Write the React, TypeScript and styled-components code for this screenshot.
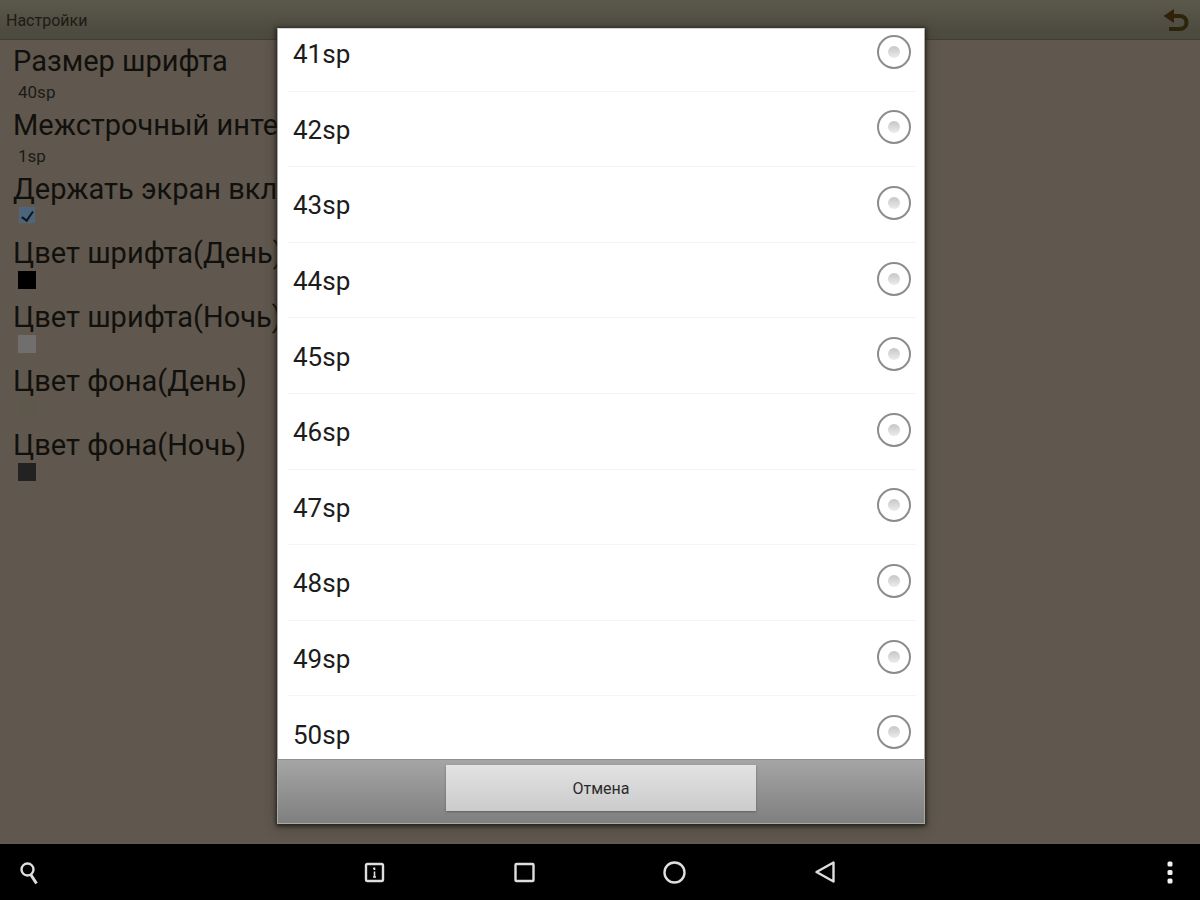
import React, { useState } from "react";
import styled, { createGlobalStyle } from "styled-components";

const GlobalStyle = createGlobalStyle`
  * { box-sizing: border-box; }
  body { margin: 0; background: #000; font-family: Roboto, "Liberation Sans", sans-serif; }
`;

const PlainButton = styled.button`
  padding: 0;
  border: 0;
  background: none;
  color: inherit;
  font: inherit;
`;

const Screen = styled.div`
  display: flex;
  flex-direction: column;
  min-height: 100vh;
`;

const Stage = styled.div`
  position: relative;
  display: flex;
  flex-direction: column;
  flex: 1;
  background: #60584e;
  border-bottom: 1px solid #5f5d4e;
`;

const Header = styled.header`
  display: flex;
  align-items: center;
  justify-content: space-between;
  height: 40px;
  padding: 2px 10px 0 6px;
  background: linear-gradient(#5b584c, #4e4b40 75%, #4c493e);
  border-bottom: 1px solid #403d34;
`;

const Title = styled.h1`
  margin: 0;
  font-size: 16px;
  font-weight: 400;
  color: #1c1b15;
`;

const BackButton = styled(PlainButton)`
  display: flex;
`;

const Settings = styled.main`
  display: flex;
  flex-direction: column;
  padding: 3px 13px 4px;
  color: #11100d;
`;

const Setting = styled.div`
  display: flex;
  flex-direction: column;
  height: 64px;
  white-space: nowrap;
`;

const SettingLabel = styled.label`
  font-size: 29px;
  line-height: 36px;
`;

const SettingValue = styled.output`
  padding-left: 5px;
  font-size: 17px;
  line-height: 26px;
  color: #1c1a16;
`;

const ControlRow = styled.div`
  display: flex;
  padding: 0 5px;
`;

const ColorButton = styled(PlainButton)<{ $color: string }>`
  width: 18px;
  height: 18px;
  background: ${(p) => p.$color};
`;

const Tick = styled.input`
  appearance: none;
  display: grid;
  place-items: center;
  width: 16px;
  height: 16px;
  margin: 0 1px;
  background: #4d657a;
  border: 1px solid #566670;
  &:checked::after {
    content: "";
    width: 5px;
    height: 10px;
    border: solid #0b1524;
    border-width: 0 2px 2px 0;
    transform: rotate(35deg);
  }
`;

const Overlay = styled.div`
  position: absolute;
  inset: 0;
  display: flex;
  justify-content: center;
  padding: 28px 0 19px 2px;
`;

const Dialog = styled.section`
  display: flex;
  flex-direction: column;
  width: 54vw;
  min-height: 0;
  background: #fff;
  border: 1px solid #a9a9a7;
  border-top-color: #d5d5d3;
  box-shadow: 0 1px 4px 1px rgba(20, 20, 15, 0.8), 0 4px 12px rgba(30, 30, 20, 0.3);
`;

const ListWindow = styled.div`
  display: flex;
  align-items: center;
  flex: 1;
  min-height: 0;
  overflow: hidden;
`;

const OptionList = styled.ul`
  display: flex;
  flex-direction: column;
  flex: 1;
  height: 756px;
  margin: 0;
  padding: 0 8px 0 10px;
  list-style: none;
`;

const OptionRow = styled.li`
  display: flex;
  flex: 1;
  border-bottom: 1px solid #f4f4f4;
`;

const OptionLabel = styled.label`
  display: flex;
  align-items: center;
  justify-content: space-between;
  flex: 1;
  padding: 2px 5px 0;
  font-size: 26px;
  line-height: 32px;
  color: #1c1c1c;
`;

const Radio = styled.input`
  appearance: none;
  display: grid;
  place-items: center;
  width: 34px;
  height: 34px;
  margin: 0 0 5px;
  border: 2px solid #8c8c8c;
  border-radius: 50%;
  &::after {
    content: "";
    width: 12px;
    height: 12px;
    border-radius: 50%;
    background: linear-gradient(#c6c6c6, #ececec);
  }
  &:checked::after { background: #4e6980; }
`;

const DialogFooter = styled.footer`
  display: flex;
  justify-content: center;
  padding: 5px 0 12px;
  background: linear-gradient(#a5a5a5, #7f7f7f);
  border-top: 1px solid #8f8f8f;
`;

const CancelButton = styled(PlainButton)`
  width: 48%;
  height: 46px;
  background: linear-gradient(#e2e2e2, #cbcbcb);
  box-shadow: 0 1px 2px rgba(60, 60, 60, 0.5);
  font-size: 16px;
  color: #2b2b2b;
`;

const NavBar = styled.nav`
  display: grid;
  grid-template-columns: 1fr repeat(4, 150px) 1fr;
  align-items: center;
  justify-items: center;
  height: 56px;
  padding-top: 1px;
  background: #000;
`;

const NavButton = styled(PlainButton)<{ $edge?: "start" | "end" }>`
  display: flex;
  justify-self: ${(p) => p.$edge ?? "center"};
  margin: ${(p) => (p.$edge ? "0 16px" : "0")};
`;

const Icon = ({ children }: { children: React.ReactNode }) => (
  <svg width="28" height="28" viewBox="0 0 28 28" fill="none" stroke="#dedede" strokeWidth="2.4" aria-hidden="true">
    {children}
  </svg>
);

const sizes = [41, 42, 43, 44, 45, 46, 47, 48, 49, 50];

const colors = [
  { label: "Цвет шрифта(День)", color: "#000000" },
  { label: "Цвет шрифта(Ночь)", color: "#706f6e" },
  { label: "Цвет фона(День)", color: "#5d584b" },
  { label: "Цвет фона(Ночь)", color: "#222222" },
];

export default function App() {
  const [size, setSize] = useState(40);
  const [keepOn, setKeepOn] = useState(true);

  return (
    <Screen>
      <GlobalStyle />
      <Stage>
        <Header>
          <Title>Настройки</Title>
          <BackButton aria-label="Назад">
            <svg width="28" height="28" viewBox="0 0 28 28" fill="none" aria-hidden="true">
              <path d="M9 9h8.500c4 0 7 2.500 7 6.500s-3 6.500-7 6.500H7" stroke="#2c2409" strokeWidth="4" />
              <path d="M1.500 9 12 2v14Z" fill="#33200a" />
            </svg>
          </BackButton>
        </Header>
        <Settings>
          <Setting>
            <SettingLabel htmlFor="font-size">Размер шрифта</SettingLabel>
            <SettingValue id="font-size">{size}sp</SettingValue>
          </Setting>
          <Setting>
            <SettingLabel htmlFor="line-gap">Межстрочный инте</SettingLabel>
            <SettingValue id="line-gap">1sp</SettingValue>
          </Setting>
          <Setting>
            <SettingLabel htmlFor="keep-on">Держать экран вкл</SettingLabel>
            <ControlRow>
              <Tick id="keep-on" type="checkbox" checked={keepOn} onChange={(e) => setKeepOn(e.target.checked)} />
            </ControlRow>
          </Setting>
          {colors.map((c, i) => (
            <Setting key={c.label}>
              <SettingLabel htmlFor={`color-${i}`}>{c.label}</SettingLabel>
              <ControlRow>
                <ColorButton id={`color-${i}`} $color={c.color} />
              </ControlRow>
            </Setting>
          ))}
        </Settings>
        <Overlay>
          <Dialog role="dialog" aria-label="Размер шрифта">
            <ListWindow>
              <OptionList>
                {sizes.map((n) => (
                  <OptionRow key={n}>
                    <OptionLabel>
                      {n}sp
                      <Radio type="radio" name="size" checked={size === n} onChange={() => setSize(n)} />
                    </OptionLabel>
                  </OptionRow>
                ))}
              </OptionList>
            </ListWindow>
            <DialogFooter>
              <CancelButton type="button">Отмена</CancelButton>
            </DialogFooter>
          </Dialog>
        </Overlay>
      </Stage>
      <NavBar>
        <NavButton $edge="start" aria-label="Поиск">
          <Icon>
            <circle cx="11.500" cy="10.500" r="6" />
            <path d="M15 16l5.500 8.500" strokeWidth="3" />
          </Icon>
        </NavButton>
        <NavButton aria-label="Информация">
          <Icon>
            <rect x="5" y="5" width="17" height="17" rx="1.500" />
            <path d="M13.500 8.500v2.500M13.500 12.500v6M12 18h3M12 9.500h1.500" strokeWidth="1.600" />
          </Icon>
        </NavButton>
        <NavButton aria-label="Недавние">
          <Icon>
            <rect x="4.500" y="5" width="18" height="17" rx="1" />
          </Icon>
        </NavButton>
        <NavButton aria-label="Домой">
          <Icon>
            <circle cx="13.500" cy="13.500" r="10" />
          </Icon>
        </NavButton>
        <NavButton aria-label="Назад">
          <Icon>
            <path d="M22.500 3.500v19L5.500 13Z" strokeLinejoin="round" />
          </Icon>
        </NavButton>
        <NavButton $edge="end" aria-label="Меню">
          <Icon>
            <g fill="#f2f2f2" stroke="none">
              <rect x="11.500" y="2.500" width="5" height="5" rx="1.500" />
              <rect x="11.500" y="11" width="5" height="5" rx="1.500" />
              <rect x="11.500" y="19.500" width="5" height="5" rx="1.500" />
            </g>
          </Icon>
        </NavButton>
      </NavBar>
    </Screen>
  );
}
